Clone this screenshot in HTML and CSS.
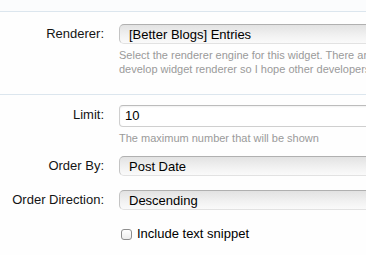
FILE: index.html
```html
<!DOCTYPE html>
<html lang="en">
<head>
    <meta charset="UTF-8">
    <title>Widget Options</title>
    <link rel="stylesheet" href="styles.css">
</head>
<body>
    <div class="form-top"></div>

    <div class="form-block">
        <div class="ctrl-row">
            <label class="ctrl-label">Renderer:</label>
            <div class="ctrl-unit">
                <div class="select-box">[Better Blogs] Entries</div>
                <p class="explain">Select the renderer engine for this widget. There are a lot of renderers available and it's very easy to<br>develop widget renderer so I hope other developers will make more.</p>
            </div>
        </div>
    </div>

    <div class="form-block">
        <div class="ctrl-row with-explain">
            <label class="ctrl-label">Limit:</label>
            <div class="ctrl-unit">
                <div class="text-box">10</div>
                <p class="explain">The maximum number that will be shown</p>
            </div>
        </div>
        <div class="ctrl-row">
            <label class="ctrl-label">Order By:</label>
            <div class="ctrl-unit">
                <div class="select-box">Post Date</div>
            </div>
        </div>
        <div class="ctrl-row">
            <label class="ctrl-label">Order Direction:</label>
            <div class="ctrl-unit">
                <div class="select-box">Descending</div>
            </div>
        </div>
        <div class="ctrl-row check-row">
            <div></div>
            <div class="ctrl-unit">
                <label class="check"><span class="check-box"></span>Include text snippet</label>
            </div>
        </div>
    </div>
</body>
</html>
```

FILE: styles.css
```css
* {
    margin: 0;
    padding: 0;
    box-sizing: border-box;
}

body {
    font-family: 'Liberation Sans', Arial, sans-serif;
    font-size: 13px;
    color: #000;
    background: #fefefe;
    overflow: hidden;
    width: 366px;
}

.form-top {
    height: 11px;
    background: #fbfcfd;
}

.form-block {
    border-top: 1px solid #dce6ee;
    padding: 12px 0 18px;
}

.form-block + .form-block {
    padding-top: 10px;
}

.ctrl-row {
    display: grid;
    grid-template-columns: 104px 1fr;
    column-gap: 15px;
    margin-bottom: 14px;
}

.ctrl-row.with-explain {
    margin-bottom: 11px;
}

.ctrl-row.check-row {
    margin-top: 16px;
}

.ctrl-row:last-child {
    margin-bottom: 0;
}

.ctrl-label {
    text-align: right;
    line-height: 20px;
    color: #141414;
}

.ctrl-unit {
    min-width: 0;
}

.select-box {
    width: 300px;
    height: 20px;
    line-height: 19px;
    padding-left: 9px;
    border: 1px solid #c4c4c4;
    border-top-color: #b0b0b0;
    border-bottom-color: #e2e2e2;
    border-radius: 5px;
    background: linear-gradient(to bottom, #e2e2e2, #f2f2f2 60%, #fafafa);
    white-space: nowrap;
}

.text-box {
    width: 300px;
    height: 22px;
    line-height: 20px;
    padding-left: 5px;
    border: 1px solid #cfcfcf;
    border-top-color: #bcbcbc;
    border-radius: 4px;
    background: #fff;
    box-shadow: inset 0 1px 2px rgba(0, 0, 0, 0.06);
}

.explain {
    margin-top: 4px;
    font-size: 11px;
    line-height: 14px;
    color: #9a9a9a;
    white-space: nowrap;
}

.check {
    display: flex;
    align-items: center;
    gap: 5px;
    line-height: 16px;
    padding-left: 2px;
}

.check-box {
    width: 11px;
    height: 11px;
    border: 1px solid #8e8e8e;
    border-radius: 3px;
    background: linear-gradient(to bottom, #fff, #ededed);
}
```
